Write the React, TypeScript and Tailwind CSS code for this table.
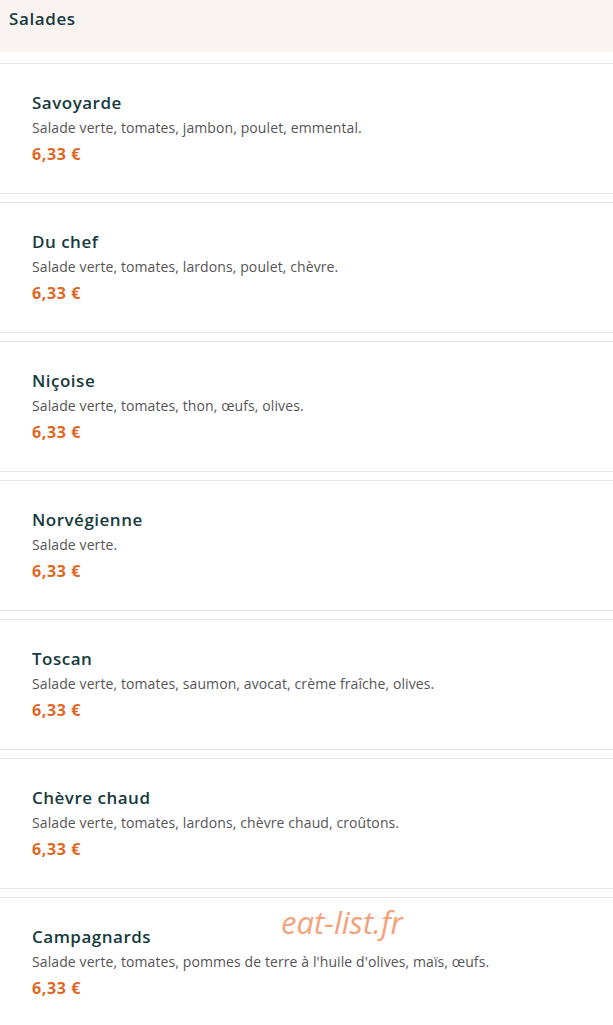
import React from "react";

type Salade = {
  name: string;
  description: string;
  price: string;
};

const salades: Salade[] = [
  { name: "Savoyarde", description: "Salade verte, tomates, jambon, poulet, emmental.", price: "6,33 €" },
  { name: "Du chef", description: "Salade verte, tomates, lardons, poulet, chèvre.", price: "6,33 €" },
  { name: "Niçoise", description: "Salade verte, tomates, thon, œufs, olives.", price: "6,33 €" },
  { name: "Norvégienne", description: "Salade verte.", price: "6,33 €" },
  { name: "Toscan", description: "Salade verte, tomates, saumon, avocat, crème fraîche, olives.", price: "6,33 €" },
  { name: "Chèvre chaud", description: "Salade verte, tomates, lardons, chèvre chaud, croûtons.", price: "6,33 €" },
  {
    name: "Campagnards",
    description: "Salade verte, tomates, pommes de terre à l'huile d'olives, maïs, œufs.",
    price: "6,33 €",
  },
];

/** One dish card of the menu */
function DishCard({ dish }: { dish: Salade }) {
  return (
    <div className="h-[131px] shrink-0 border-y border-[#e6e6e6] bg-white px-8 pt-[27px]">
      <h3 className="text-[17px] leading-6 font-semibold tracking-[0.5px] text-[#173a3d]">{dish.name}</h3>
      <p className="mt-[3px] text-[14px] leading-5 tracking-[0.1px] text-[#555555]">{dish.description}</p>
      <p className="mt-[4px] text-[16px] leading-6 font-bold tracking-[0.6px] text-[#e0661f]">{dish.price}</p>
    </div>
  );
}

export default function App() {
  return (
    <div className="relative h-[1025px] w-[613px] overflow-hidden bg-white font-['Open_Sans',sans-serif]">
      {/* Category header */}
      <div className="flex h-[52px] items-start bg-[#f9f4f1] px-[9px] pt-[7px]">
        <h2 className="text-[17px] leading-6 font-semibold tracking-[0.6px] text-[#173a3d]">Salades</h2>
      </div>

      {/* Dish list */}
      <div className="flex flex-col gap-2 pt-[11px]">
        {salades.map((dish) => (
          <DishCard key={dish.name} dish={dish} />
        ))}
      </div>

      {/* Watermark */}
      <span className="absolute left-[281px] top-[899px] text-[31px] italic text-[#f4a27c]">
        eat-list.fr
      </span>
    </div>
  );
}
